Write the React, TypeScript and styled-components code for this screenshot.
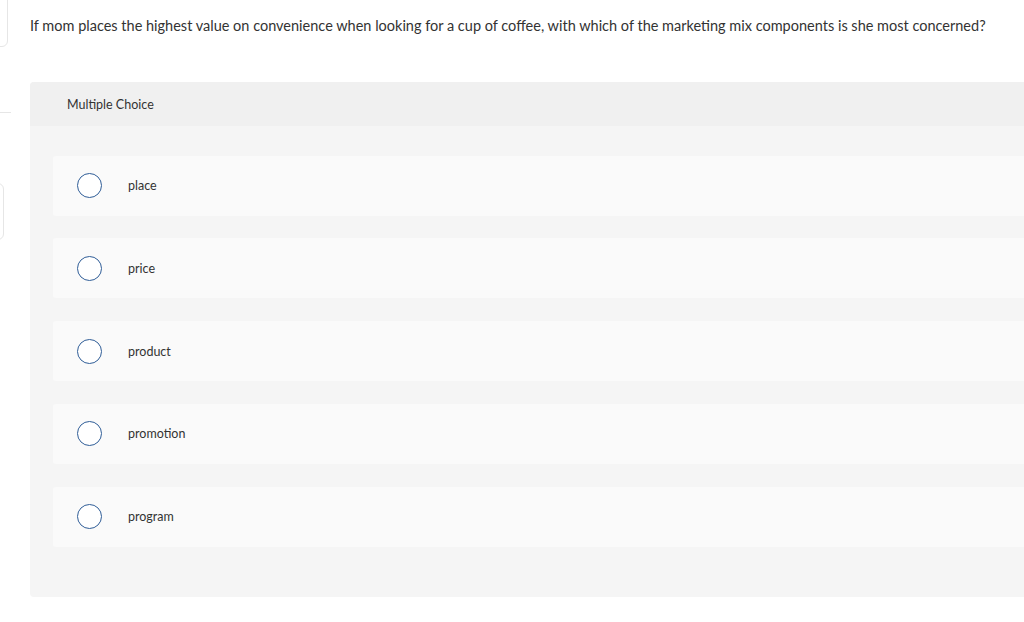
import React from "react";
import styled, { createGlobalStyle } from "styled-components";

const Global = createGlobalStyle`
  html, body { margin: 0; padding: 0; background: #fff; }
  body { overflow: hidden; font-family: "Lato", "Open Sans", Arial, sans-serif; color: #333; }
`;

const Page = styled.div`
  display: flex;
  width: 1024px;
  height: 622px;
  overflow: hidden;
`;

const Sidebar = styled.aside`
  width: 30px;
  flex-shrink: 0;
  position: relative;
  overflow: hidden;
`;

const SideInner = styled.div`
  margin-left: -200px;
  width: 208px;
  display: flex;
  flex-direction: column;
`;

const SideCard = styled.div<{ $h: number; $w: number; $mt: number }>`
  margin-top: ${(p) => p.$mt}px;
  width: ${(p) => p.$w}px;
  height: ${(p) => p.$h}px;
  border: 1px solid #e6e6e6;
  border-radius: 6px;
  box-sizing: border-box;
`;

const SideRule = styled.div`
  margin-top: 65px;
  width: 211px;
  height: 1px;
  background: #e6e6e6;
`;

const Main = styled.main`
  flex-shrink: 0;
  width: 1010px;
  padding-top: 17px;
`;

const Question = styled.p`
  margin: 0;
  font-size: 14.5px;
  line-height: 18px;
  color: #333;
  white-space: nowrap;
`;

const Panel = styled.section`
  margin-top: 47px;
  background: #f5f5f5;
  border-radius: 4px;
  padding-bottom: 50px;
`;

const PanelHeader = styled.div`
  height: 44px;
  background: #f0f0f0;
  border-radius: 4px 4px 0 0;
  display: flex;
  align-items: center;
  padding-left: 37px;
  font-size: 12.5px;
  color: #333;
`;

const Options = styled.div`
  display: flex;
  flex-direction: column;
  gap: 22.75px;
  padding: 29.5px 0 0 23px;
`;

const Option = styled.label`
  display: flex;
  align-items: center;
  height: 60px;
  background: #fafafa;
  border-radius: 3px;
  padding-left: 24px;
  cursor: pointer;
`;

const Radio = styled.span`
  width: 25px;
  height: 25px;
  box-sizing: border-box;
  border: 1.5px solid #2f5d97;
  border-radius: 50%;
  background: #fff;
  flex-shrink: 0;
`;

const OptionText = styled.span`
  margin-left: 26px;
  font-size: 12.5px;
  color: #333;
`;

const choices = ["place", "price", "product", "promotion", "program"];

export default function App() {
  return (
    <>
      <Global />
      <Page>
        <Sidebar>
          <SideInner>
            <SideCard $mt={-10} $w={208} $h={57} />
            <SideRule />
            <SideCard $mt={70} $w={204} $h={57} />
          </SideInner>
        </Sidebar>
        <Main>
          <Question>
            If mom places the highest value on convenience when looking for a cup of coffee, with which of the marketing mix components is she most concerned?
          </Question>
          <Panel>
            <PanelHeader>Multiple Choice</PanelHeader>
            <Options>
              {choices.map((c) => (
                <Option key={c}>
                  <Radio />
                  <OptionText>{c}</OptionText>
                </Option>
              ))}
            </Options>
          </Panel>
        </Main>
      </Page>
    </>
  );
}
